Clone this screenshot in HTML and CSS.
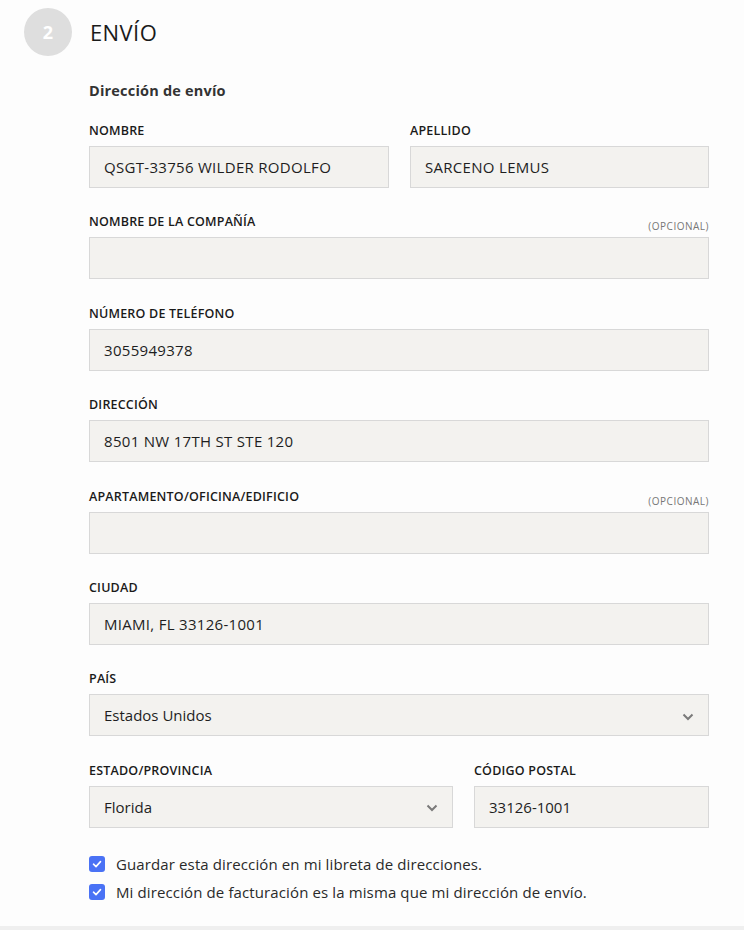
FILE: index.html
```html
<!DOCTYPE html>
<html lang="es">
<head>
<meta charset="utf-8">
<title>Envío</title>
<link rel="stylesheet" href="styles.css">
</head>
<body>
<div class="page">
  <header class="step">
    <div class="step-num">2</div>
    <h2 class="step-title">ENVÍO</h2>
  </header>
  <form class="form">
    <h3 class="section-title">Dirección de envío</h3>

    <div class="row two">
      <div class="field">
        <label class="label">NOMBRE</label>
        <div class="input">QSGT-33756 WILDER RODOLFO</div>
      </div>
      <div class="field">
        <label class="label">APELLIDO</label>
        <div class="input">SARCENO LEMUS</div>
      </div>
    </div>

    <div class="field">
      <div class="label-row"><label class="label">NOMBRE DE LA COMPAÑÍA</label><span class="optional">(OPCIONAL)</span></div>
      <div class="input"></div>
    </div>

    <div class="field">
      <label class="label">NÚMERO DE TELÉFONO</label>
      <div class="input">3055949378</div>
    </div>

    <div class="field">
      <label class="label">DIRECCIÓN</label>
      <div class="input">8501 NW 17TH ST STE 120</div>
    </div>

    <div class="field">
      <div class="label-row"><label class="label">APARTAMENTO/OFICINA/EDIFICIO</label><span class="optional">(OPCIONAL)</span></div>
      <div class="input"></div>
    </div>

    <div class="field">
      <label class="label">CIUDAD</label>
      <div class="input">MIAMI, FL 33126-1001</div>
    </div>

    <div class="field">
      <label class="label">PAÍS</label>
      <div class="input select"><span class="sel-text">Estados Unidos</span>
        <svg class="chev" width="12" height="8" viewBox="0 0 12 8"><path d="M1.5 1.5 L6 6 L10.5 1.5" fill="none" stroke="#7a7a7a" stroke-width="2"/></svg>
      </div>
    </div>

    <div class="row split">
      <div class="field">
        <label class="label">ESTADO/PROVINCIA</label>
        <div class="input select"><span class="sel-text">Florida</span>
          <svg class="chev" width="12" height="8" viewBox="0 0 12 8"><path d="M1.5 1.5 L6 6 L10.5 1.5" fill="none" stroke="#7a7a7a" stroke-width="2"/></svg>
        </div>
      </div>
      <div class="field">
        <label class="label">CÓDIGO POSTAL</label>
        <div class="input"><span class="sel-text">33126-1001</span></div>
      </div>
    </div>

    <div class="checks">
      <div class="check">
        <span class="box"><svg width="16" height="16" viewBox="0 0 16 16"><path d="M4.5 8.2 L7 10.6 L11.5 5.6" fill="none" stroke="#fff" stroke-width="1.6" stroke-linecap="round" stroke-linejoin="round"/></svg></span>
        <span class="check-text">Guardar esta dirección en mi libreta de direcciones.</span>
      </div>
      <div class="check">
        <span class="box"><svg width="16" height="16" viewBox="0 0 16 16"><path d="M4.5 8.2 L7 10.6 L11.5 5.6" fill="none" stroke="#fff" stroke-width="1.6" stroke-linecap="round" stroke-linejoin="round"/></svg></span>
        <span class="check-text">Mi dirección de facturación es la misma que mi dirección de envío.</span>
      </div>
    </div>
  </form>
</div>
<div class="bottom-bar"></div>
</body>
</html>
```
FILE: styles.css
```css
html, body {
  margin: 0;
  padding: 0;
}
body {
  background: #fdfdfd;
  font-family: "Open Sans", "DejaVu Sans", sans-serif;
  color: #222;
  width: 744px;
  height: 930px;
  display: flex;
  flex-direction: column;
}
.page {
  flex: 1;
  padding: 8px 0 0 24px;
}
.step {
  display: flex;
  align-items: center;
  gap: 18px;
  height: 48px;
}
.step-num {
  width: 48px;
  height: 48px;
  border-radius: 50%;
  background: #dedede;
  color: #fff;
  font-weight: 700;
  font-size: 18px;
  display: flex;
  align-items: center;
  justify-content: center;
}
.step-title {
  margin: 0;
  font-size: 22px;
  font-weight: 500;
  letter-spacing: 0.4px;
  color: #1a1a1a;
}
.form {
  margin: 0 0 0 65px;
  width: 620px;
  padding-top: 25px;
}
.section-title {
  margin: 0 0 22px;
  font-size: 14.5px;
  line-height: 20px;
  font-weight: 700;
  letter-spacing: 0.2px;
  color: #333;
}
.row {
  display: grid;
  column-gap: 21px;
}
.row.two { grid-template-columns: 300px 299px; }
.row.split { grid-template-columns: 364px 235px; }
.field {
  margin-bottom: 26.4px;
}
.label-row {
  display: flex;
  justify-content: space-between;
  align-items: baseline;
}
.label {
  display: block;
  font-size: 12.5px;
  line-height: 16px;
  font-weight: 600;
  letter-spacing: 0.2px;
  margin-bottom: 7px;
  color: #1a1a1a;
}
.optional {
  font-size: 10px;
  color: #777;
  letter-spacing: 0.5px;
  position: relative;
  top: 4px;
}
.input {
  box-sizing: border-box;
  height: 42px;
  background: #f3f2ef;
  border: 1px solid #d8d8d8;
  padding: 0 14px;
  display: flex;
  align-items: center;
  font-size: 15px;
  font-weight: 500;
  letter-spacing: 0.3px;
  color: #1e1e1e;
}
.select {
  justify-content: space-between;
  padding-right: 14px;
}
.sel-text {
  font-weight: 500;
  font-size: 15px;
  letter-spacing: 0;
}
.chev {
  display: block;
  margin-top: 3px;
}
.checks {
  margin-top: 0;
  display: flex;
  flex-direction: column;
  gap: 8px;
}
.check {
  display: flex;
  align-items: center;
  gap: 11px;
  height: 20px;
}
.box {
  width: 16px;
  height: 16px;
  border-radius: 3px;
  background: #4a72f5;
  display: block;
}
.box svg { display: block; }
.check-text {
  font-size: 15px;
  letter-spacing: 0.12px;
  color: #2a2a2a;
}
.bottom-bar {
  height: 4px;
  background: #efefef;
}
```
